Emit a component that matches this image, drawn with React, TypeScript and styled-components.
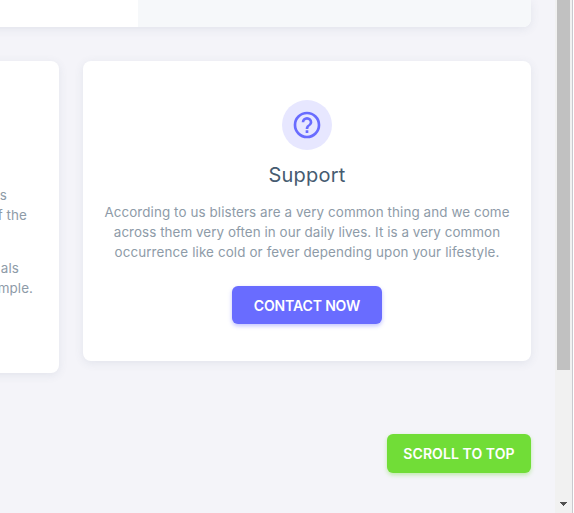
import React from "react";
import styled, { createGlobalStyle } from "styled-components";

const GlobalStyle = createGlobalStyle`
  *, *::before, *::after { box-sizing: border-box; }
  body { margin: 0; overflow: hidden; background: #f4f4f9; font-family: Inter, "Liberation Sans", sans-serif; }
  p, h2 { margin: 0; }
`;

const Window = styled.div`
  display: flex;
  width: 574px;
  height: 513px;
  overflow: hidden;
  background: #f4f4f9;
`;

const Page = styled.main`
  width: 555px;
  flex: none;
  padding-right: 24px;
  overflow: hidden;
`;

const cardShadow = "0 2px 10px rgba(67, 89, 113, 0.1)";

const PlanCard = styled.section`
  display: flex;
  height: 27px;
  margin-left: -20px;
  background: #fff;
  border-radius: 0 0 8px 0;
  box-shadow: ${cardShadow};
`;

const PlanAside = styled.div`
  margin-left: 158px;
  flex: 1;
  background: #f6f8fa;
  border-radius: 0 0 8px 0;
`;

const CardRow = styled.div`
  display: flex;
  align-items: flex-start;
  gap: 24px;
  margin-top: 34px;
  margin-left: -20px;
`;

const InfoCard = styled.section`
  width: 79px;
  height: 312px;
  padding: 124px 0 0 20px;
  background: #fff;
  border-radius: 0 8px 8px 0;
  box-shadow: ${cardShadow};
`;

const InfoText = styled.div<{ $end: number }>`
  display: flex;
  justify-content: flex-end;
  width: ${({ $end }) => $end}px;
  height: 20px;
  line-height: 20px;
  font-size: 13.4px;
  letter-spacing: 0.1px;
  white-space: nowrap;
  color: #8e9ba8;
`;

const Gap = styled.div`
  height: 33px;
`;

const SupportCard = styled.section`
  display: flex;
  flex-direction: column;
  align-items: center;
  width: 448px;
  height: 300px;
  padding-top: 39px;
  background: #fff;
  border-radius: 8px;
  box-shadow: ${cardShadow};
`;

const Avatar = styled.div`
  display: flex;
  align-items: center;
  justify-content: center;
  width: 50px;
  height: 50px;
  border-radius: 50%;
  background: #e7e7ff;
  color: #696cff;
`;

const Title = styled.h2`
  margin-top: 9px;
  height: 32px;
  line-height: 32px;
  font-size: 20px;
  font-weight: 400;
  letter-spacing: 0.22px;
  color: #465b70;
`;

const Description = styled.p`
  margin-top: 11px;
  color: #8e9ba8;
  font-size: 13.4px;
  line-height: 20px;
  text-align: center;
  white-space: nowrap;
`;

const Line = styled.span<{ $spacing: number }>`
  display: block;
  letter-spacing: ${({ $spacing }) => $spacing}px;
`;

const Button = styled.button<{ $tone: "primary" | "success" }>`
  display: flex;
  align-items: center;
  justify-content: center;
  width: ${({ $tone }) => ($tone === "primary" ? 150 : 144)}px;
  height: ${({ $tone }) => ($tone === "primary" ? 38 : 39)}px;
  padding: 0;
  border: 0;
  border-radius: 6px;
  background: ${({ $tone }) => ($tone === "primary" ? "#696cff" : "#71dd37")};
  box-shadow: 0 2px 4px ${({ $tone }) => ($tone === "primary" ? "rgba(105,108,255,.4)" : "rgba(113,221,55,.4)")};
  color: #fff;
  font: 600 14px Inter, sans-serif;
  letter-spacing: ${({ $tone }) => ($tone === "primary" ? -0.14 : 0.08)}px;
  white-space: nowrap;
`;

const ContactSlot = styled.div`
  margin-top: 24px;
`;

const Footer = styled.footer`
  display: flex;
  justify-content: flex-end;
  margin-top: 61px;
`;

const Scrollbar = styled.aside`
  display: flex;
  flex-direction: column;
  align-items: center;
  justify-content: space-between;
  width: 17px;
  height: 513px;
  flex: none;
  background: #f1f1f1;
`;

const Thumb = styled.div`
  width: 13px;
  height: 370px;
  background: #c1c1c1;
`;

const ArrowDown = styled.svg`
  display: block;
  margin-bottom: 7px;
`;

const Edge = styled.div`
  width: 2px;
  flex: none;
  background: #fff;
  border-left: 1px solid #c9c9ce;
`;

const HelpIcon = () => (
  <svg width="32" height="32" viewBox="0 0 24 24" fill="currentColor">
    <path d="M11,18H13V16H11V18M12,2A10,10 0 0,0 2,12A10,10 0 0,0 12,22A10,10 0 0,0 22,12A10,10 0 0,0 12,2M12,20C7.59,20 4,16.41 4,12C4,7.59 7.59,4 12,4C16.41,4 20,7.59 20,12C20,16.41 16.41,20 12,20M12,6A4,4 0 0,0 8,10H10A2,2 0 0,1 12,8A2,2 0 0,1 14,10C14,12 11,11.75 11,15H13C13,12.75 16,12.5 16,10A4,4 0 0,0 12,6Z" />
  </svg>
);

export default function App() {
  return (
    <Window>
      <GlobalStyle />
      <Page>
        <PlanCard>
          <PlanAside />
        </PlanCard>
        <CardRow>
          <InfoCard>
            <InfoText $end={7}>s</InfoText>
            <InfoText $end={27}>f the</InfoText>
            <Gap />
            <InfoText $end={19}>als</InfoText>
            <InfoText $end={33}>mple.</InfoText>
          </InfoCard>
          <SupportCard>
            <Avatar>
              <HelpIcon />
            </Avatar>
            <Title>Support</Title>
            <Description>
              <Line $spacing={0.1}>According to us blisters are a very common thing and we come</Line>
              <Line $spacing={0.055}>across them very often in our daily lives. It is a very common</Line>
              <Line $spacing={0.13}>occurrence like cold or fever depending upon your lifestyle.</Line>
            </Description>
            <ContactSlot>
              <Button $tone="primary">CONTACT NOW</Button>
            </ContactSlot>
          </SupportCard>
        </CardRow>
        <Footer>
          <Button $tone="success">SCROLL TO TOP</Button>
        </Footer>
      </Page>
      <Scrollbar>
        <Thumb />
        <ArrowDown width="7" height="4" viewBox="0 0 7 4" fill="#505050" shapeRendering="crispEdges">
          <path d="M0 0H7V1H6V2H5V3H4V4H3V3H2V2H1V1H0Z" />
        </ArrowDown>
      </Scrollbar>
      <Edge />
    </Window>
  );
}
